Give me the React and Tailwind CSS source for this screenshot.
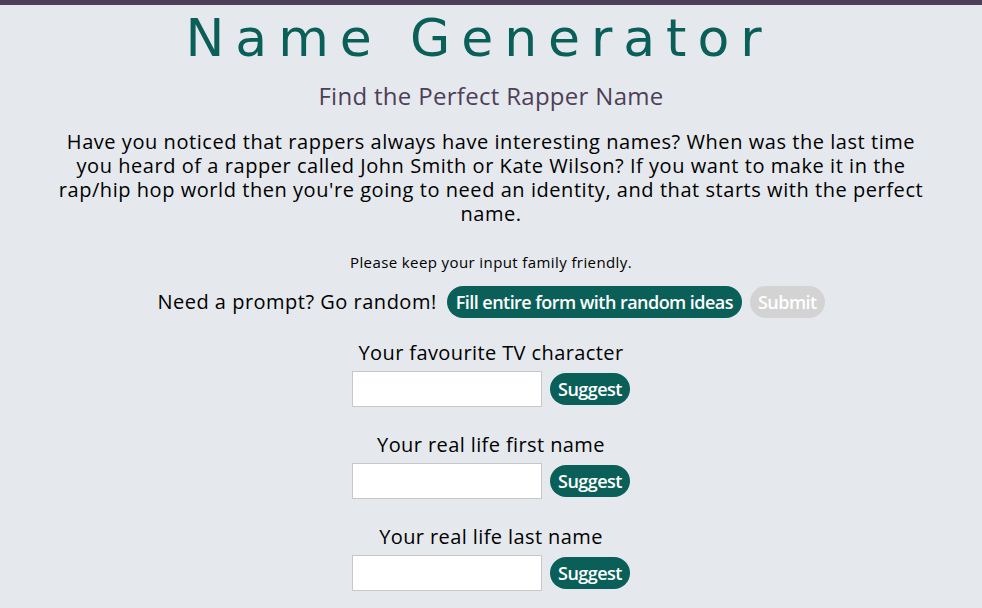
export default function App() {
  const fields = [
    "Your favourite TV character",
    "Your real life first name",
    "Your real life last name",
  ];
  const btnFont = { fontFamily: "'Open Sans', sans-serif", letterSpacing: "-0.03em" };
  return (
    <div className="min-h-[608px] bg-[#e5e8ec] border-t-[5px] border-[#4e3f59] text-black" style={{ fontFamily: "'Open Sans', Lato, sans-serif" }}>
      <div className="flex flex-col items-center">
        <h1 className="mt-[4px] h-[58px] text-[52px] leading-[58px] text-[#0b5f59] tracking-[0.21em] pr-[24px]" style={{ fontFamily: "'DejaVu Sans', sans-serif" }}>
          Name Generator
        </h1>
        <h2 className="mt-[16px] text-[24px] leading-[26px] text-[#4e3f59] tracking-[0.3px]">Find the Perfect Rapper Name</h2>
        <p className="mt-[21px] w-[940px] text-center text-[20px] leading-[24px] tracking-[0.55px]">
          Have you noticed that rappers always have interesting names? When was the last time
          <br />
          you heard of a rapper called John Smith or Kate Wilson? If you want to make it in the
          <br />
          rap/hip hop world then you're going to need an identity, and that starts with the perfect
          <br />
          name.
        </p>
        <div className="mt-[27px] text-[15px] leading-[18px] tracking-[0.4px]">Please keep your input family friendly.</div>
        <div className="mt-[15px] flex items-center gap-[8px]">
          <span className="text-[20px] leading-[24px] mr-[2px] tracking-[0.5px]">Need a prompt? Go random!</span>
          <button className="h-[32px] px-[9px] rounded-full bg-[#0b5f59] text-white text-[18px] font-semibold" style={btnFont}>
            Fill entire form with random ideas
          </button>
          <button className="h-[32px] px-[8px] rounded-full bg-[#d3d3d3] text-white text-[18px] font-semibold" style={btnFont}>
            Submit
          </button>
        </div>
        <div className="mt-[23px] flex flex-col items-center gap-[26px]">
          {fields.map((f) => (
            <div key={f} className="flex flex-col items-center">
              <label className="text-[20px] leading-[24px] tracking-[0.4px]">{f}</label>
              <div className="mt-[6px] flex items-center gap-[8px]">
                <input className="w-[190px] h-[36px] bg-white border border-[#c8c8c8]" />
                <button className="h-[32px] px-[8px] rounded-full bg-[#0b5f59] text-white text-[18px] font-semibold" style={btnFont}>
                  Suggest
                </button>
              </div>
            </div>
          ))}
        </div>
      </div>
    </div>
  );
}
